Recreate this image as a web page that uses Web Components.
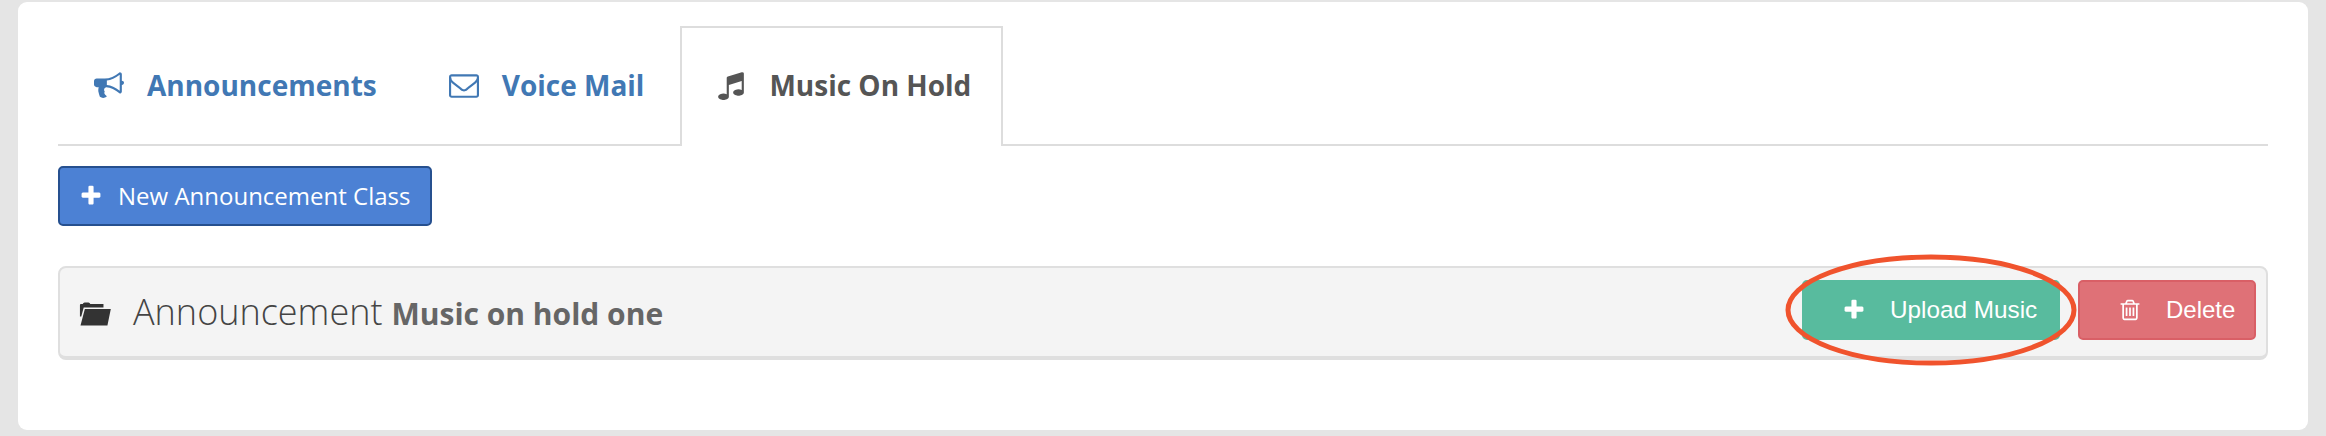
<!DOCTYPE html>
<html><head><meta charset="utf-8">
<style>
html,body{margin:0;padding:0;background:#e5e5e5;height:436px;overflow:hidden}
body{font-family:"Open Sans",sans-serif}
</style></head><body>
<template id="t-icon"><style>:host{display:inline-flex;align-items:center;justify-content:center;line-height:0}svg{display:block;fill:currentColor}</style><svg id="s"></svg></template>
<script>
const ICONS={
plus:"M1600 736v192q0 40-28 68t-68 28h-416v416q0 40-28 68t-68 28h-192q-40 0-68-28t-28-68v-416h-416q-40 0-68-28t-28-68v-192q0-40 28-68t68-28h416v-416q0-40 28-68t68-28h192q40 0 68 28t28 68v416h416q40 0 68 28t28 68z",
envelope:"M1664 1504v-768q-32 36-69 66-268 206-426 338-51 43-83 67t-86.500 48.500-102.500 24.500h-2q-48 0-102.500-24.500t-86.500-48.500-83-67q-158-132-426-338-37-30-69-66v768q0 13 9.500 22.500t22.500 9.500h1472q13 0 22.500-9.500t9.500-22.500zm0-1051v-24.500l-.5-13-3-12.500-5.500-9-9-7.500-14-2.500h-1472q-13 0-22.500 9.500t-9.500 22.500q0 168 147 284 193 152 401 317 6 5 35 29.500t46 37.500 44.500 31.500 50.500 27.500 43 9h2q20 0 43-9t50.500-27.500 44.500-31.500 46-37.500 35-29.500q208-165 401-317 54-43 100.500-115.500t46.500-131.500zm128-37v1088q0 66-47 113t-113 47h-1472q-66 0-113-47t-47-113v-1088q0-66 47-113t113-47h1472q66 0 113 47t47 113z",
music:"M1664 224v1120q0 50-34 89t-86 60.500-103.500 32-96.500 10.500-96.500-10.500-103.500-32-86-60.500-34-89 34-89 86-60.500 103.500-32 96.500-10.500q105 0 192 39v-537l-768 237v709q0 50-34 89t-86 60.500-103.500 32-96.500 10.500-96.500-10.500-103.500-32-86-60.500-34-89 34-89 86-60.500 103.500-32 96.500-10.500q105 0 192 39v-967q0-31 19-56.500t49-35.500l832-256q12-4 28-4 40 0 68 28t28 68z",
trash:"M704 736v576q0 14-9 23t-23 9h-64q-14 0-23-9t-9-23v-576q0-14 9-23t23-9h64q14 0 23 9t9 23zm256 0v576q0 14-9 23t-23 9h-64q-14 0-23-9t-9-23v-576q0-14 9-23t23-9h64q14 0 23 9t9 23zm256 0v576q0 14-9 23t-23 9h-64q-14 0-23-9t-9-23v-576q0-14 9-23t23-9h64q14 0 23 9t9 23zm128 724v-948h-896v948q0 22 7 40.500t14.500 27 10.500 8.500h832q3 0 10.500-8.500t14.500-27 7-40.500zm-672-1076h448l-48-117q-7-9-17-11h-317q-10 2-17 11zm928 32v64q0 14-9 23t-23 9h-96v948q0 83-47 143.500t-113 60.500h-832q-66 0-113-58.500t-47-141.500v-952h-96q-14 0-23-9t-9-23v-64q0-14 9-23t23-9h309l70-167q15-37 54-63t79-26h320q40 0 79 26t54 63l70 167h309q14 0 23 9t9 23z",
bullhorn:"M1664 640q53 0 90.500 37.500t37.500 90.500-37.500 90.500-90.500 37.500v384q0 52-38 90t-90 38q-417-347-812-380-58 19-91 66t-31 100.500 40 92.500q-20 33-23 65.500t6 58 33.500 55 48 50 61.500 50.500q-29 58-111.500 83t-168.500 11.500-132-55.500q-7-23-29.500-87.500t-32-94.500-23-89-15-101 3.500-98.500 22-110.500h-122q-66 0-113-47t-47-113v-192q0-66 47-113t113-47h480q435 0 896-384 52 0 90 38t38 90v384zm-128 604v-954q-394 302-768 343v270q377 42 768 341z",
folder:"M60 150 L60 40 Q60 30 70 30 L90 30 Q95 14 110 14 L150 14 Q165 14 170 30 L310 30 L310 62 L100 62 L74 150 Z M112 76 L388 76 L352 236 L66 236 Z"
};
class XIcon extends HTMLElement{
  constructor(){super();this.attachShadow({mode:"open"}).appendChild(document.getElementById("t-icon").content.cloneNode(true))}
  connectedCallback(){const s=this.shadowRoot.getElementById("s");const n=this.getAttribute("name");const sz=this.getAttribute("size")||"24";s.setAttribute("width",sz);s.setAttribute("height",this.getAttribute("h")||sz);s.setAttribute("viewBox",n==="folder"?"50 0 340 250":"0 0 1792 1792");s.setAttribute("preserveAspectRatio","none");s.innerHTML=`<path d="${ICONS[n]}"/>`}
}
customElements.define("x-icon",XIcon);

class XCard extends HTMLElement{constructor(){super();this.attachShadow({mode:"open"}).innerHTML=`<style>:host{display:block;box-sizing:border-box;height:428px;margin:2px 18px 6px;padding:24px 40px 0;background:#fff;border-radius:9px}</style><slot></slot>`}}
customElements.define("x-card",XCard);

class XTabs extends HTMLElement{constructor(){super();this.attachShadow({mode:"open"}).innerHTML=`<style>:host{display:flex;align-items:flex-end;height:118px;border-bottom:2px solid #ddd;box-sizing:content-box}</style><slot></slot>`}}
customElements.define("x-tabs",XTabs);

class XTab extends HTMLElement{constructor(){super();this.attachShadow({mode:"open"}).innerHTML=`<style>
:host{display:flex;align-items:center;box-sizing:border-box;height:120px;margin-bottom:-2px;padding:0 34px 4px 34px;font:700 28px/38px "Open Sans",sans-serif;color:#4178b4;border:2px solid transparent;border-bottom:0;background:transparent}
:host([active]){color:#555;background:#fff;border-color:#ddd;padding-right:30px}
.i{display:inline-flex;margin-right:var(--gap,23px)}
</style><span class="i"><slot name="icon"></slot></span><slot></slot>`}}
customElements.define("x-tab",XTab);

class XBtn extends HTMLElement{constructor(){super();this.attachShadow({mode:"open"}).innerHTML=`<style>
:host{display:inline-flex;align-items:center;box-sizing:border-box;border:2px solid transparent;border-radius:5px;color:#fff;height:60px;white-space:nowrap}
:host([kind=primary]){background:#4c81d4;border-color:#26508f;font:400 24px/30px "Open Sans",sans-serif;padding:0 0 0 19px;width:374px}
:host([kind=upload]){background:#58bb9e;border-color:#58bb9e;font:400 24.300px/30px "Liberation Sans",sans-serif;padding:0 0 0 38px;width:258px}
:host([kind=delete]){background:#df7177;border-color:#d95f66;font:400 24px/30px "Liberation Sans",sans-serif;padding:0 0 0 38px;width:178px}
.i{display:inline-flex;margin-right:var(--gap,15px)}
</style><span class="i"><slot name="icon"></slot></span><slot></slot>`}}
customElements.define("x-btn",XBtn);

class XPanel extends HTMLElement{constructor(){super();this.attachShadow({mode:"open"}).innerHTML=`<style>
:host{display:flex;align-items:center;box-sizing:border-box;height:94px;margin-top:40px;padding:0 10px 4px 20px;background:#f4f4f4;border:2px solid #dfdfdf;border-bottom-width:4px;border-radius:8px;position:relative}
.t{flex:1;display:flex;align-items:center;min-width:0;padding-top:3px}
.a{display:flex;gap:18px;align-items:center}
</style><div class="t"><slot name="title"></slot></div><div class="a"><slot name="actions"></slot></div><slot name="overlay"></slot>`}}
customElements.define("x-panel",XPanel);

class XTitle extends HTMLElement{constructor(){super();this.attachShadow({mode:"open"}).innerHTML=`<style>
:host{display:flex;align-items:baseline;white-space:nowrap;font:300 36px/48px "Open Sans",sans-serif;color:#444}
::slotted(b){font:700 30px/38px "Open Sans",sans-serif;color:#666;margin-left:9px}
.i{display:inline-flex;align-self:center;margin-top:4px;margin-right:22px;margin-left:-1px;color:#333}
</style><span class="i"><slot name="icon"></slot></span><slot></slot>`}}
customElements.define("x-title",XTitle);

class XRing extends HTMLElement{constructor(){super();this.attachShadow({mode:"open"}).innerHTML=`<style>:host{position:absolute;left:1726px;top:-13px;width:290px;height:110px;pointer-events:none}svg{display:block;overflow:visible}</style><svg width="290" height="110" viewBox="0 0 290 110"><ellipse cx="145" cy="55" rx="143" ry="53" fill="none" stroke="#f0532d" stroke-width="5"/></svg>`}}
customElements.define("x-ring",XRing);
</script>
<x-card>
  <x-tabs>
    <x-tab><x-icon slot="icon" name="bullhorn" size="30"></x-icon>Announcements</x-tab>
    <x-tab><x-icon slot="icon" name="envelope" size="30"></x-icon>Voice Mail</x-tab>
    <x-tab active><x-icon slot="icon" name="music" size="30"></x-icon>Music On Hold</x-tab>
  </x-tabs>
  <div style="margin-top:20px;display:flex"><x-btn kind="primary"><x-icon slot="icon" name="plus" size="24"></x-icon>New Announcement Class</x-btn></div>
  <x-panel>
    <x-title slot="title"><x-icon slot="icon" name="folder" size="32" h="26"></x-icon>Announcement <b>Music on hold one</b></x-title>
    <x-btn slot="actions" kind="upload" style="--gap:24px"><x-icon slot="icon" name="plus" size="24"></x-icon>Upload Music</x-btn>
    <x-btn slot="actions" kind="delete" style="--gap:24px"><x-icon slot="icon" name="trash" size="24"></x-icon>Delete</x-btn>
    <x-ring slot="overlay"></x-ring>
  </x-panel>
</x-card>
</body></html>
